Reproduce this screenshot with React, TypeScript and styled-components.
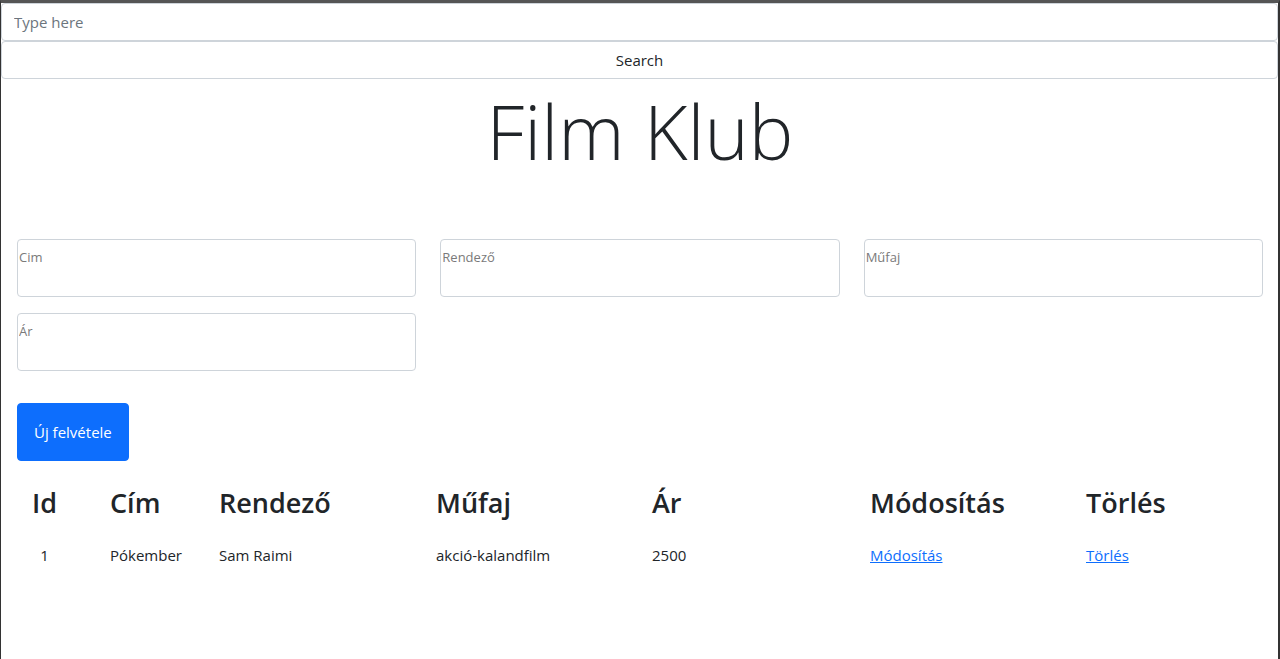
import React from "react";
import styled, { createGlobalStyle } from "styled-components";

const FONT = `"Open Sans", "Noto Sans", sans-serif`;

const GlobalStyle = createGlobalStyle`
  html, body { margin: 0; padding: 0; background: #fff; }
  body { font-family: ${FONT}; color: #212529; font-size: 16px; }
  * { box-sizing: border-box; }
`;

const Page = styled.div`
  width: 1280px;
  min-height: 659px;
  border-top: 3px solid #555555;
  border-left: 1px solid #333333;
  border-right: 2px solid #333333;
  background: #fff;
`;

const SearchBar = styled.form`
  display: flex;
  flex-direction: column;
`;

const SearchInput = styled.input`
  height: 38px;
  width: 100%;
  padding: 6px 12px;
  font-family: ${FONT};
  font-size: 15px;
  color: #212529;
  border: 1px solid #ced4da;
  border-radius: 4px;
  outline: none;
  &::placeholder { color: #6c757d; }
`;

const SearchButton = styled.button`
  height: 38px;
  width: 100%;
  background: #fff;
  font-family: ${FONT};
  font-size: 15px;
  color: #212529;
  border: 1px solid #ced4da;
  border-radius: 4px;
  cursor: pointer;
`;

const Container = styled.main`
  padding: 0 15px 0 16px;
`;

const Title = styled.h1`
  margin: 0;
  text-align: center;
  font-family: ${FONT};
  font-weight: 300;
  font-size: 75px;
  line-height: 104px;
  color: #212529;
`;

const FieldGrid = styled.div`
  display: grid;
  grid-template-columns: repeat(3, 1fr);
  column-gap: 24px;
  row-gap: 16px;
  margin-top: 56px;
`;

const Field = styled.input`
  height: 58px;
  width: 100%;
  padding: 7px 1px 29px;
  font-family: ${FONT};
  font-size: 13px;
  line-height: 20px;
  border: 1px solid #ced4da;
  border-radius: 4px;
  outline: none;
  &::placeholder { color: #7a7a7a; }
`;

const PrimaryButton = styled.button`
  margin-top: 32px;
  height: 58px;
  padding: 0 16px;
  background: #0d6efd;
  color: #fff;
  border: 1px solid #0d6efd;
  border-radius: 4px;
  font-family: ${FONT};
  font-size: 15px;
  cursor: pointer;
`;

const Table = styled.table`
  width: 100%;
  margin-top: 19px;
  border-collapse: collapse;
  table-layout: fixed;
`;

const Col = styled.col<{ $w?: number }>`
  width: ${(p) => (p.$w ? `${p.$w}px` : "auto")};
`;

const HeadCell = styled.th<{ $id?: boolean }>`
  padding: 4px 0 6px ${(p) => (p.$id ? "15px" : "0")};
  text-align: left;
  font-family: ${FONT};
  font-size: 27px;
  font-weight: 600;
  line-height: 38px;
  color: #212529;
  white-space: nowrap;
`;

const IdInner = styled.span`
  display: inline-block;
  width: 25px;
  text-align: center;
`;

const BodyCell = styled.td<{ $id?: boolean }>`
  padding: 15px 0 8px ${(p) => (p.$id ? "15px" : "0")};
  font-family: ${FONT};
  font-size: 15px;
  line-height: 24px;
  color: #212529;
  white-space: nowrap;
`;

const Link = styled.a`
  color: #0d6efd;
  text-decoration: underline;
`;

const films = [
  { id: 1, cim: "Pókember", rendezo: "Sam Raimi", mufaj: "akció-kalandfilm", ar: 2500 },
];

export default function App() {
  return (
    <>
      <GlobalStyle />
      <Page>
        <SearchBar onSubmit={(e) => e.preventDefault()}>
          <SearchInput placeholder="Type here" />
          <SearchButton type="submit">Search</SearchButton>
        </SearchBar>
        <Container>
          <Title>Film Klub</Title>
          <FieldGrid>
            <Field placeholder="Cim" />
            <Field placeholder="Rendező" />
            <Field placeholder="Műfaj" />
            <Field placeholder="Ár" />
          </FieldGrid>
          <PrimaryButton>Új felvétele</PrimaryButton>
          <Table>
            <colgroup>
              <Col $w={93} />
              <Col $w={109} />
              <Col $w={217} />
              <Col $w={216} />
              <Col $w={218} />
              <Col $w={216} />
              <Col />
            </colgroup>
            <thead>
              <tr>
                <HeadCell $id><IdInner>Id</IdInner></HeadCell>
                <HeadCell>Cím</HeadCell>
                <HeadCell>Rendező</HeadCell>
                <HeadCell>Műfaj</HeadCell>
                <HeadCell>Ár</HeadCell>
                <HeadCell>Módosítás</HeadCell>
                <HeadCell>Törlés</HeadCell>
              </tr>
            </thead>
            <tbody>
              {films.map((f) => (
                <tr key={f.id}>
                  <BodyCell $id><IdInner>{f.id}</IdInner></BodyCell>
                  <BodyCell>{f.cim}</BodyCell>
                  <BodyCell>{f.rendezo}</BodyCell>
                  <BodyCell>{f.mufaj}</BodyCell>
                  <BodyCell>{f.ar}</BodyCell>
                  <BodyCell><Link href="#">Módosítás</Link></BodyCell>
                  <BodyCell><Link href="#">Törlés</Link></BodyCell>
                </tr>
              ))}
            </tbody>
          </Table>
        </Container>
      </Page>
    </>
  );
}
